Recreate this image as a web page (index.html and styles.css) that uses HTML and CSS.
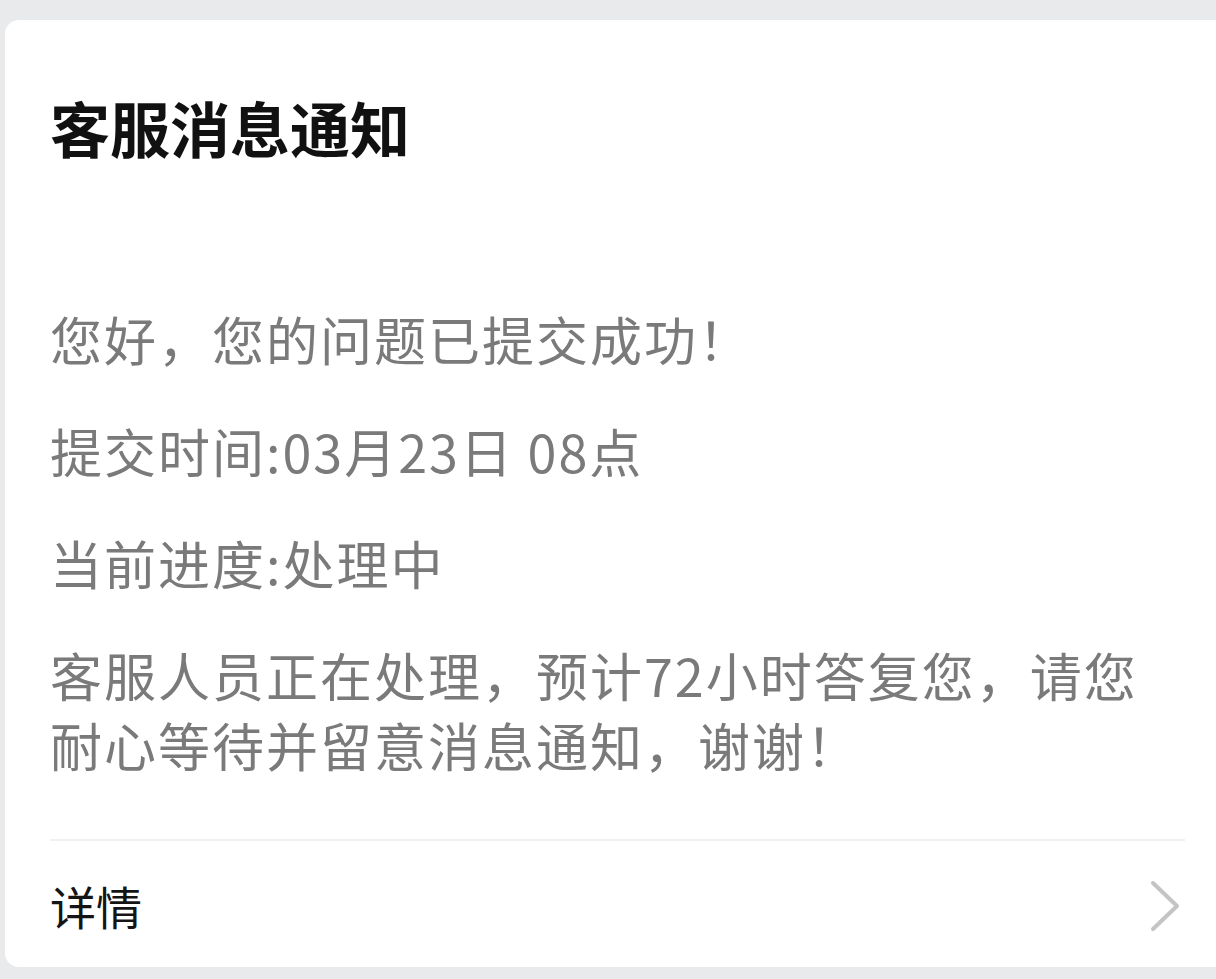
FILE: index.html
```html
<!DOCTYPE html>
<html lang="zh-CN">
<head>
<meta charset="utf-8">
<link rel="stylesheet" href="styles.css">
</head>
<body>
<div class="card">
  <h1 class="title">客服消息通知</h1>
  <div class="content">
    <p class="para">您好，您的问题已提交成功！</p>
    <p class="para">提交时间:03月23日&nbsp;08点</p>
    <p class="para">当前进度:处理中</p>
    <p class="para">客服人员正在处理，预计72小时答复您，请您耐心等待并留意消息通知，谢谢！</p>
  </div>
  <div class="divider"></div>
  <div class="detail">
    <span class="detail-label">详情</span>
    <svg class="chevron" width="34" height="52" viewBox="0 0 34 52"><path d="M4 3 L28 26 L4 49" fill="none" stroke="#c4c4c4" stroke-width="4" stroke-linecap="round" stroke-linejoin="round"/></svg>
  </div>
</div>
</body>
</html>
```
FILE: styles.css
```css
html, body {
  margin: 0;
  padding: 0;
}
body {
  background: #e9eaec;
  font-family: "Noto Sans CJK SC", "Noto Sans", sans-serif;
  height: 979px;
  overflow: hidden;
}
.card {
  margin: 20px 0 0 5px;
  background: #ffffff;
  border-radius: 14px 0 0 14px;
  padding: 67px 31px 0 45px;
}
.title {
  margin: 0;
  font-size: 60px;
  line-height: 80px;
  font-weight: 700;
  color: #111111;
}
.content {
  margin-top: 137px;
  display: flex;
  flex-direction: column;
  gap: 42px;
}
.para {
  margin: 0;
  font-size: 52px;
  line-height: 70px;
  color: #7a7a7a;
  letter-spacing: 2px;
  padding-right: 40px;
}
.divider {
  margin-top: 59px;
  height: 2px;
  background: #f0f0f0;
}
.detail {
  height: 126px;
  display: flex;
  align-items: center;
  justify-content: space-between;
}
.detail-label {
  font-size: 46px;
  color: #151515;
  padding-top: 2px;
}
.chevron {
  display: block;
  margin-right: 2px;
  margin-top: 4px;
}
```
